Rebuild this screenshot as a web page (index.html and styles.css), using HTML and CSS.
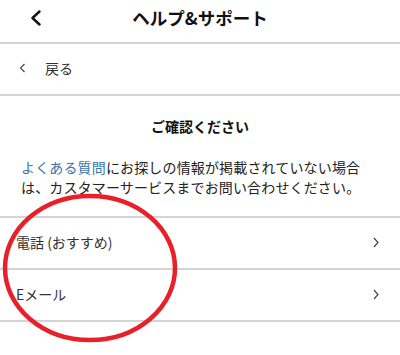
FILE: index.html
```html
<!DOCTYPE html>
<html lang="ja">
<head>
<meta charset="utf-8">
<link rel="stylesheet" href="styles.css">
</head>
<body>
<div class="page">
  <header class="topbar">
    <span class="topbar-back">
      <svg width="12" height="16" viewBox="0 0 12 16"><path d="M9.5 1.5 L2.5 8 L9.5 14.5" fill="none" stroke="#111" stroke-width="2.4" stroke-linecap="round" stroke-linejoin="round"/></svg>
    </span>
    <h1 class="topbar-title">ヘルプ&amp;サポート</h1>
  </header>
  <div class="back-row">
    <svg class="back-chev" width="7" height="10" viewBox="0 0 7 10"><path d="M5.5 1 L1.5 5 L5.5 9" fill="none" stroke="#444" stroke-width="1.1"/></svg>
    <span class="back-label">戻る</span>
  </div>
  <section class="notice">
    <h2 class="notice-title">ご確認ください</h2>
    <p class="notice-text"><a class="link">よくある質問</a>にお探しの情報が掲載されていない場合は、カスタマーサービスまでお問い合わせください。</p>
  </section>
  <ul class="menu">
    <li class="menu-item"><span>電話 (おすすめ)</span>
      <svg class="menu-chev" width="6" height="11" viewBox="0 0 6 11"><path d="M1 1 L5 5.5 L1 10" fill="none" stroke="#444" stroke-width="1.2"/></svg>
    </li>
    <li class="menu-item"><span>Eメール</span>
      <svg class="menu-chev" width="6" height="11" viewBox="0 0 6 11"><path d="M1 1 L5 5.5 L1 10" fill="none" stroke="#444" stroke-width="1.2"/></svg>
    </li>
  </ul>
  <svg class="annotation" width="186" height="156" viewBox="0 0 186 156"><ellipse cx="90" cy="76" rx="85" ry="72" fill="none" stroke="#e8202a" stroke-width="4.5"/></svg>
</div>
</body>
</html>
```
FILE: styles.css
```css
* { box-sizing: border-box; }
html, body { margin: 0; padding: 0; background: #fff; }
body {
  font-family: "Noto Sans CJK JP", "Noto Sans", sans-serif;
  color: #222;
}
.page {
  position: relative;
  width: 400px;
  height: 355px;
  overflow: hidden;
}
.topbar {
  position: relative;
  height: 44px;
  border-bottom: 2px solid #d4d4d4;
  display: flex;
  justify-content: center;
}
.topbar-back {
  position: absolute;
  left: 30px;
  top: 10px;
  display: flex;
}
.topbar-title {
  margin: 0;
  font-size: 17.5px;
  font-weight: 700;
  line-height: 36px;
  color: #111;
}
.back-row {
  height: 52px;
  border-bottom: 2px solid #d4d4d4;
  display: flex;
  align-items: center;
  padding-left: 19px;
  padding-bottom: 2px;
}
.back-chev { margin-right: 19px; }
.back-label {
  font-size: 14px;
  color: #333;
}
.notice {
  padding: 20px 21px 19px;
  border-bottom: 2px solid #d4d4d4;
}
.notice-title {
  margin: 0 0 21px;
  text-align: center;
  font-size: 14px;
  font-weight: 700;
  line-height: 20px;
  color: #111;
}
.notice-text {
  margin: 0;
  font-size: 14px;
  line-height: 20px;
  letter-spacing: 0.15px;
  color: #222;
}
.link { color: #3b73aa; }
.menu {
  list-style: none;
  margin: 0;
  padding: 0;
}
.menu-item {
  height: 52px;
  border-bottom: 2px solid #d4d4d4;
  display: flex;
  align-items: center;
  justify-content: space-between;
  padding: 0 21px 2px 16px;
  font-size: 14px;
  color: #333;
}
.annotation {
  position: absolute;
  left: 0;
  top: 192px;
}
```
